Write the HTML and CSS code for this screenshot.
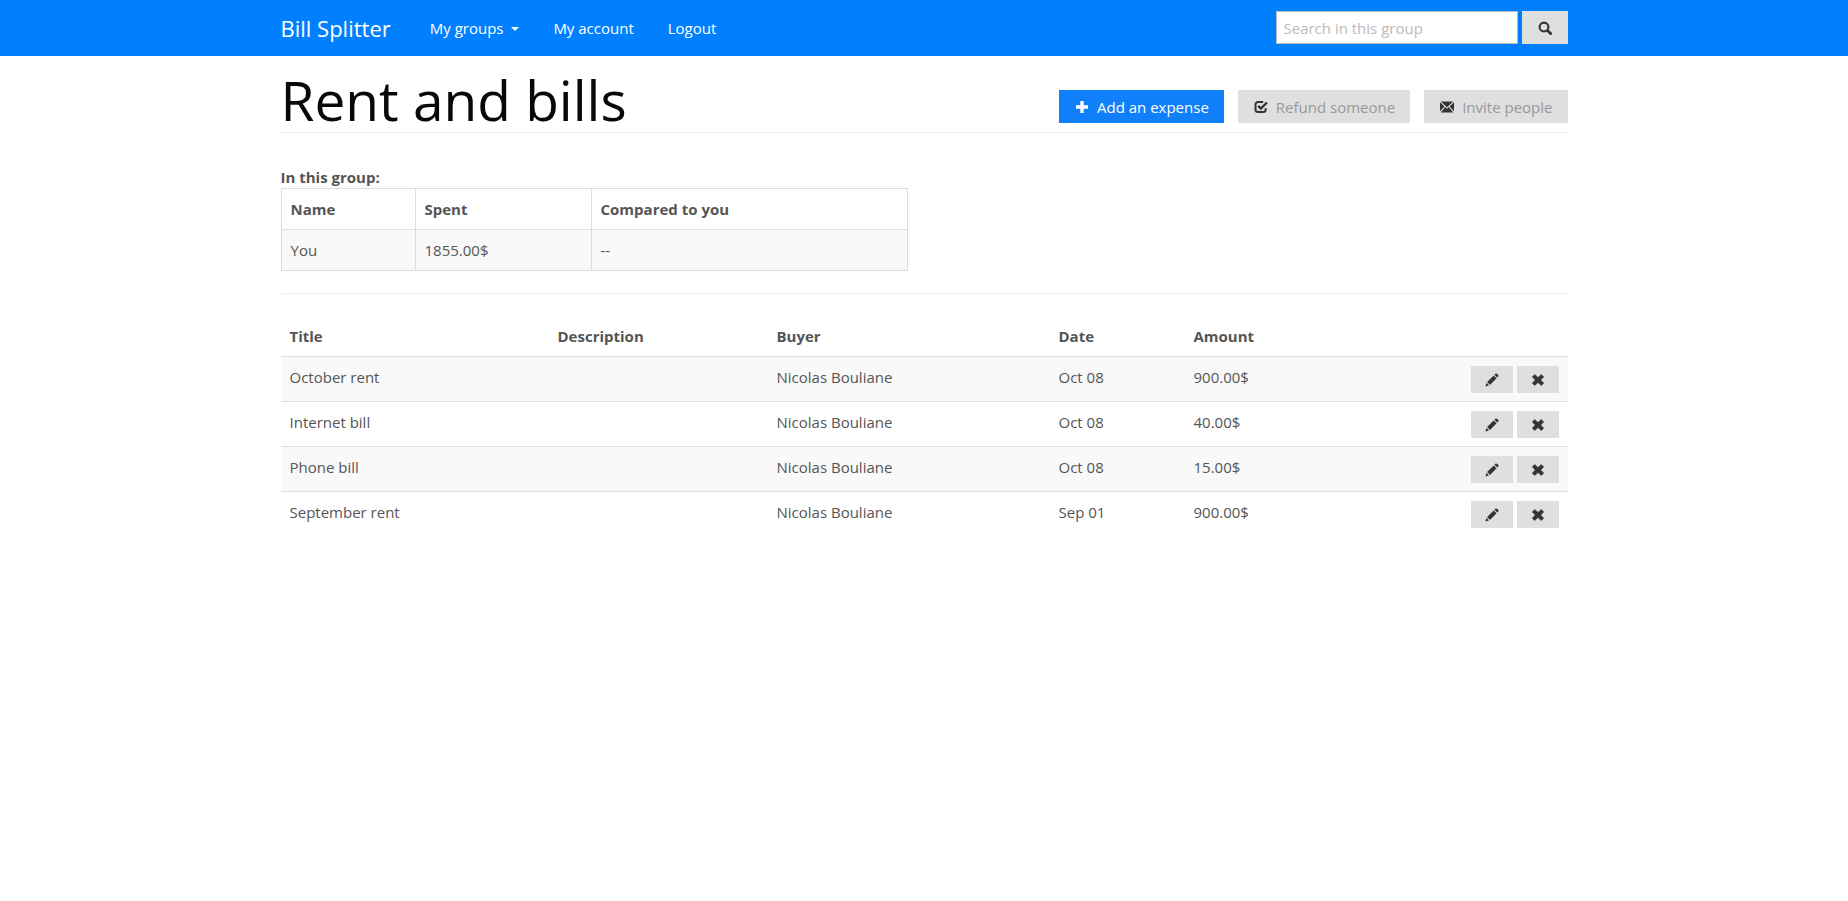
FILE: index.html
```html
<!DOCTYPE html>
<html lang="en">
<head>
<meta charset="utf-8">
<meta name="viewport" content="width=device-width, initial-scale=1">
<title>Rent and bills - Bill Splitter</title>
<link rel="stylesheet" href="styles.css">
</head>
<body>
<svg class="sprite" aria-hidden="true">
  <symbol id="i-search" viewBox="0 0 14 14"><circle cx="6" cy="6" r="4.4" fill="none" stroke="currentColor" stroke-width="2.1"/><path d="M9.4 9.4l3.2 3.2" stroke="currentColor" stroke-width="2.8" stroke-linecap="round"/></symbol>
  <symbol id="i-plus" viewBox="0 0 14 14"><path d="M5.3 1h3.4v4.3H13v3.4H8.7V13H5.3V8.7H1V5.3h4.3z" fill="currentColor"/></symbol>
  <symbol id="i-check" viewBox="0 0 14 14"><path d="M9.2 1.9H4A2.5 2.5 0 0 0 1.5 4.4v5.2A2.5 2.5 0 0 0 4 12.1h5.2a2.5 2.5 0 0 0 2.5-2.5V8.3" fill="none" stroke="currentColor" stroke-width="2"/><path d="M4.2 5.8l2.7 2.7 6-6" fill="none" stroke="currentColor" stroke-width="2.4"/></symbol>
  <symbol id="i-mail" viewBox="0 0 14 12"><path d="M.8.5h12.4L7 6.3zM0 1.200l4.500 4.200L0 10.300zM14 1.200v9.100L9.500 5.400zM5.200 6.100L7 7.800l1.800-1.700 4.400 5.400H.8z" fill="currentColor"/></symbol>
  <symbol id="i-pencil" viewBox="0 0 14 14"><path d="M.5 13.5l1-3.700L3.900 12.400zM2.100 9l6.600-6.600 2.900 2.900L5 11.900zM9.400 1.700l.8-.8c.7-.7 1.500-.5 2.200.2l.5.5c.7.7.9 1.500.2 2.200l-.8.8z" fill="currentColor"/></symbol>
  <symbol id="i-remove" viewBox="0 0 14 14"><path d="M3.700 1.500L7 4.500l3.300-3 2.400 2.400L9.700 7l3 3.200-2.400 2.300L7 9.500l-3.300 3-2.400-2.300L4.300 7l-3-3.100z" fill="currentColor" stroke="currentColor" stroke-width=".6" stroke-linejoin="round"/></symbol>
</svg>

<header class="navbar">
  <div class="container navbar-inner">
    <a class="brand" href="#">Bill Splitter</a>
    <nav class="nav">
      <a href="#">My groups <span class="caret"></span></a>
      <a href="#">My account</a>
      <a href="#">Logout</a>
    </nav>
    <form class="search">
      <input type="text" placeholder="Search in this group" aria-label="Search in this group">
      <button class="btn btn-search" type="button" aria-label="Search"><svg class="icon"><use href="#i-search"/></svg></button>
    </form>
  </div>
</header>

<main class="container">
  <div class="page-header">
    <h1>Rent and bills</h1>
    <div class="actions">
      <button class="btn btn-primary" type="button"><svg class="icon"><use href="#i-plus"/></svg>Add an expense</button>
      <button class="btn" type="button"><svg class="icon"><use href="#i-check"/></svg>Refund someone</button>
      <button class="btn" type="button"><svg class="icon"><use href="#i-mail"/></svg>Invite people</button>
    </div>
  </div>

  <section class="group">
    <strong id="group-label">In this group:</strong>
    <table class="table members" aria-labelledby="group-label">
      <colgroup><col class="c-name"><col class="c-spent"><col></colgroup>
      <thead><tr><th>Name</th><th>Spent</th><th>Compared to you</th></tr></thead>
      <tbody><tr><td>You</td><td>1855.00$</td><td>--</td></tr></tbody>
    </table>
  </section>

  <hr>

  <table class="table expenses">
    <colgroup><col class="c-title"><col class="c-desc"><col class="c-buyer"><col class="c-date"><col><col class="c-tools"></colgroup>
    <thead><tr><th>Title</th><th>Description</th><th>Buyer</th><th>Date</th><th>Amount</th><th></th></tr></thead>
    <tbody>
      <tr><td>October rent</td><td></td><td>Nicolas Bouliane</td><td>Oct 08</td><td>900.00$</td><td><div class="tools"><button class="btn btn-small" type="button" aria-label="Edit"><svg class="icon"><use href="#i-pencil"/></svg></button><button class="btn btn-small" type="button" aria-label="Delete"><svg class="icon"><use href="#i-remove"/></svg></button></div></td></tr>
      <tr><td>Internet bill</td><td></td><td>Nicolas Bouliane</td><td>Oct 08</td><td>40.00$</td><td><div class="tools"><button class="btn btn-small" type="button" aria-label="Edit"><svg class="icon"><use href="#i-pencil"/></svg></button><button class="btn btn-small" type="button" aria-label="Delete"><svg class="icon"><use href="#i-remove"/></svg></button></div></td></tr>
      <tr><td>Phone bill</td><td></td><td>Nicolas Bouliane</td><td>Oct 08</td><td>15.00$</td><td><div class="tools"><button class="btn btn-small" type="button" aria-label="Edit"><svg class="icon"><use href="#i-pencil"/></svg></button><button class="btn btn-small" type="button" aria-label="Delete"><svg class="icon"><use href="#i-remove"/></svg></button></div></td></tr>
      <tr><td>September rent</td><td></td><td>Nicolas Bouliane</td><td>Sep 01</td><td>900.00$</td><td><div class="tools"><button class="btn btn-small" type="button" aria-label="Edit"><svg class="icon"><use href="#i-pencil"/></svg></button><button class="btn btn-small" type="button" aria-label="Delete"><svg class="icon"><use href="#i-remove"/></svg></button></div></td></tr>
    </tbody>
  </table>
</main>
</body>
</html>
```
FILE: styles.css
```css
* { box-sizing: border-box; }
body {
  margin: 0;
  background: #fff;
  color: #555;
  font: 15px/22px "Open Sans", sans-serif;
}
.sprite { display: none; }
.container { max-width: 1287px; margin: 0 auto; }
.icon { width: 14px; height: 14px; flex: none; color: #333; }

.navbar { background: #007fff; }
.navbar-inner { display: flex; align-items: center; padding: 11px 0 12px; }
.navbar a { color: #fff; text-decoration: none; }
.brand { font-size: 22px; margin-right: 39px; }
.nav { display: flex; gap: 34px; }
.caret {
  display: inline-block;
  margin-left: 4px;
  vertical-align: middle;
  border: 4px solid transparent;
  border-top-color: #fff;
  border-bottom: 0;
}
.search { display: flex; gap: 4px; margin-left: auto; }
.search input {
  width: 242px;
  height: 33px;
  padding: 0 7px;
  border: 1px solid #bbb;
  background: #fff;
  color: #555;
  font: inherit;
}
.search input::placeholder { color: #bbb; opacity: 1; }

.btn {
  display: inline-flex;
  align-items: center;
  justify-content: center;
  gap: 8px;
  height: 33px;
  padding: 0 15px 0 16px;
  border: 0;
  background: #dfdfdf;
  color: #999;
  font: inherit;
  white-space: nowrap;
}
.btn-search { width: 46px; padding: 0; }
.btn-primary { background: #1080fa; color: #fff; }
.btn-primary .icon { color: #fff; }
.btn-small { width: 42px; height: 27px; padding: 0; }

.page-header {
  display: flex;
  justify-content: space-between;
  align-items: flex-end;
  padding: 7px 0 9px;
  border-bottom: 1px solid #eee;
}
h1 { margin: 0 0 -14px; color: #080808; font-size: 55px; font-weight: 400; line-height: 74px; }
.actions { display: flex; gap: 14px; }

.group { padding-top: 33px; }
.group strong { display: block; }
.table { width: 100%; border-collapse: collapse; table-layout: fixed; }
.table th, .table td { padding: 9px; text-align: left; vertical-align: top; border-top: 1px solid #ddd; }
.members { max-width: 627px; }
.members th, .members td { border: 1px solid #ddd; }
.table tbody tr:nth-child(odd) { background: #f9f9f9; }
hr { margin: 22px 0; border: 0; border-top: 1px solid #eee; }
.expenses th { border-top: 0; }
.expenses td { padding-bottom: 8px; }
.c-name { width: 134px; }
.c-spent { width: 176px; }
.c-title { width: 268px; }
.c-desc { width: 219px; }
.c-buyer { width: 282px; }
.c-date { width: 135px; }
.c-tools { width: 106px; }
.tools { display: flex; gap: 4px; justify-content: flex-end; }
```
